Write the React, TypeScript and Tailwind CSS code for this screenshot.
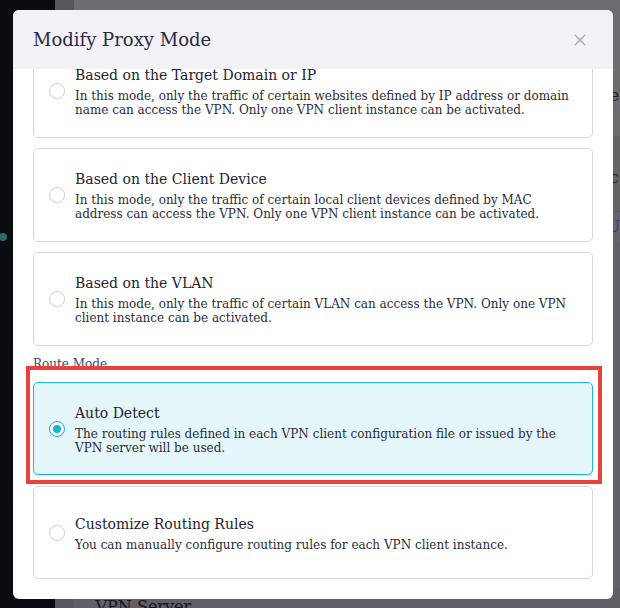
import React from "react";

const serif = { fontFamily: '"DejaVu Serif", serif' };

type Opt = { title: string; lines: string[]; checked?: boolean; h: string };

function Radio({ checked }: { checked?: boolean }) {
  if (checked) {
    return (
      <span className="flex h-[16px] w-[16px] shrink-0 items-center justify-center rounded-full border-[1.5px] border-[#17b2d3] bg-white">
        <span className="h-[8px] w-[8px] rounded-full bg-[#17b2d3]" />
      </span>
    );
  }
  return <span className="h-[16px] w-[16px] shrink-0 rounded-full border border-[#cfcfd4] bg-white" />;
}

function Card({ o }: { o: Opt }) {
  return (
    <div
      className={
        "flex items-center gap-[10px] rounded-[5px] border px-[15px] " +
        o.h +
        (o.checked ? " border-[#19b6d6] bg-[#e5f6fb]" : " border-[#d6d6db] bg-white")
      }
    >
      <Radio checked={o.checked} />
      <div className="flex flex-col">
        <div className="mb-[4px] text-[14px] leading-[20px] text-[#22232f]">{o.title}</div>
        <div className="text-[12px] leading-[14px] text-[#2b2c37]">
          {o.lines.map((l, i) => (
            <React.Fragment key={i}>
              {l}
              {i < o.lines.length - 1 && <br />}
            </React.Fragment>
          ))}
        </div>
      </div>
    </div>
  );
}

export default function App() {
  const proxy: Opt[] = [
    {
      title: "Based on the Target Domain or IP",
      lines: [
        "In this mode, only the traffic of certain websites defined by IP address or domain",
        "name can access the VPN. Only one VPN client instance can be activated.",
      ],
      h: "h-[94px]",
    },
    {
      title: "Based on the Client Device",
      lines: [
        "In this mode, only the traffic of certain local client devices defined by MAC",
        "address can access the VPN. Only one VPN client instance can be activated.",
      ],
      h: "h-[94px]",
    },
    {
      title: "Based on the VLAN",
      lines: [
        "In this mode, only the traffic of certain VLAN can access the VPN. Only one VPN",
        "client instance can be activated.",
      ],
      h: "h-[94px]",
    },
  ];
  const auto: Opt = {
    title: "Auto Detect",
    lines: [
      "The routing rules defined in each VPN client configuration file or issued by the",
      "VPN server will be used.",
    ],
    checked: true,
    h: "h-[93px]",
  };
  const custom: Opt = {
    title: "Customize Routing Rules",
    lines: ["You can manually configure routing rules for each VPN client instance."],
    h: "h-[93px]",
  };

  return (
    <div className="relative h-[608px] w-[620px] overflow-hidden bg-[#636369]" style={serif}>
      {/* dimmed background page */}
      <div className="flex h-full w-full">
        <div className="flex w-[58px] flex-col bg-[#0b0c12]">
          <div className="h-[233px]" />
          <div className="ml-[-1px] h-[8px] w-[8px] rounded-full bg-[#2a6a64]" />
        </div>
        <div className="w-[20px] bg-[#57575d]" />
        <div className="flex flex-1 flex-col">
          <div className="flex h-[136px] flex-col bg-[#6c6c71]">
            <div className="h-[86px]" />
            <div className="pl-[531px] text-[16px] leading-[20px] text-[#1e1e26]">ie</div>
          </div>
          <div className="flex h-[76px] flex-col border-b border-[#58585e] bg-[#646469]">
            <div className="h-[32px]" />
            <div className="pl-[531px] text-[16px] leading-[20px] text-[#1e1e26]">ic</div>
          </div>
          <div className="flex h-[30px] items-center bg-[#646469] pl-[533px] text-[16px] text-[#2c3a9a]">U</div>
          <div className="flex-1 bg-[#626268]" />
          <div className="h-[20px] overflow-hidden bg-[#5f5f65] pl-[22px] pt-[9px] text-[16px] leading-[20px] text-[#16161e]">
            VPN Server
          </div>
        </div>
      </div>

      {/* modal */}
      <div className="absolute left-[13px] top-[10px] flex h-[589px] w-[600px] flex-col overflow-hidden rounded-[6px] bg-white">
        <div className="flex h-[59px] shrink-0 items-center justify-between bg-[#f1f1f6] pl-[20px] pr-[27px]">
          <div className="text-[18px] leading-[24px] text-[#2a2b46]">Modify Proxy Mode</div>
          <svg width="12" height="12" viewBox="0 0 12 12" className="text-[#a3a3ab]">
            <path d="M1 1L11 11M11 1L1 11" stroke="currentColor" strokeWidth="1.2" fill="none" />
          </svg>
        </div>
        <div className="flex-1 overflow-hidden px-[20px]">
          <div className="mt-[-25px] flex flex-col">
            <Card o={proxy[0]} />
            <div className="mt-[10px]">
              <Card o={proxy[1]} />
            </div>
            <div className="mt-[10px]">
              <Card o={proxy[2]} />
            </div>
            <div className="mt-[10px] h-[16px] text-[12px] leading-[16px] text-[#3b3e72]">Route Mode</div>
            <div className="relative mt-[10px]">
              <Card o={auto} />
              <div className="pointer-events-none absolute -bottom-[9px] -left-[7px] -right-[9px] -top-[16px] border-4 border-[#e8433a]" />
            </div>
            <div className="mt-[11px]">
              <Card o={custom} />
            </div>
          </div>
        </div>
      </div>
    </div>
  );
}
